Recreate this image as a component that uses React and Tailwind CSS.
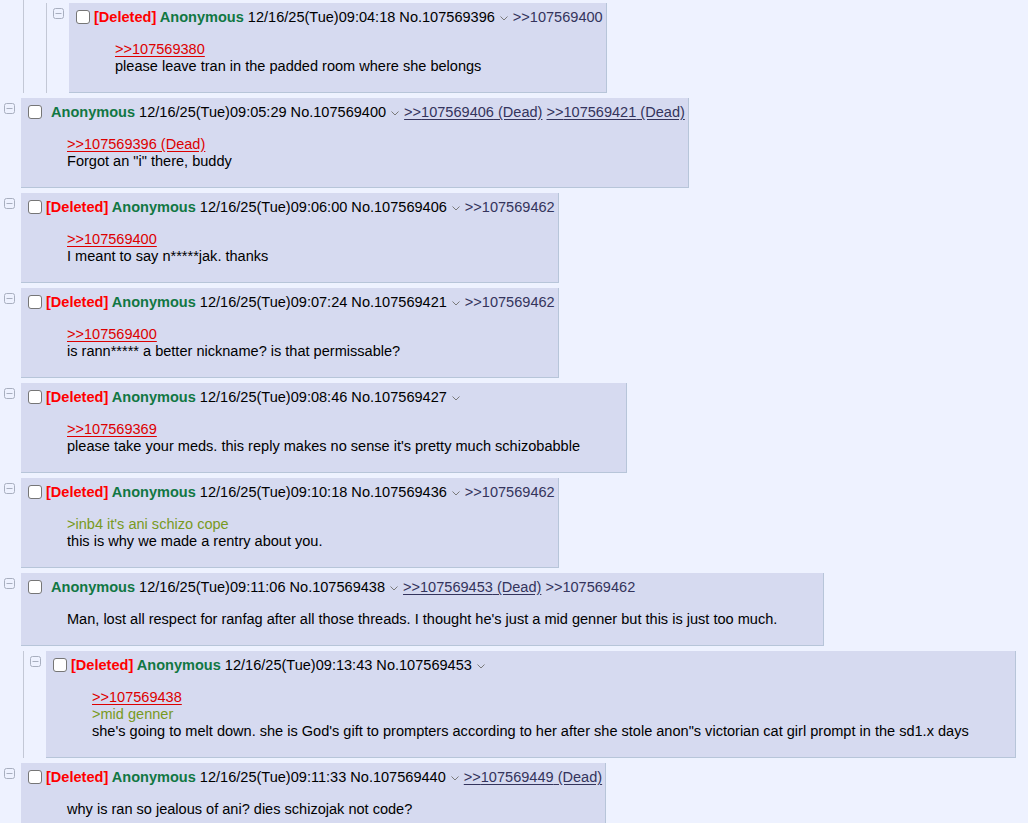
const POSTS = [
  {
    depth: 2,
    deleted: true,
    time: '12/16/25(Tue)09:04:18',
    no: '107569396',
    backlinks: [{ no: '107569400' }],
    body: [
      { kind: 'quote', text: '>>107569380' },
      { kind: 'text', text: 'please leave tran in the padded room where she belongs' },
    ],
  },
  {
    depth: 0,
    deleted: false,
    time: '12/16/25(Tue)09:05:29',
    no: '107569400',
    backlinks: [
      { no: '107569406', dead: true },
      { no: '107569421', dead: true },
    ],
    body: [
      { kind: 'quote', text: '>>107569396 (Dead)' },
      { kind: 'text', text: 'Forgot an "i" there, buddy' },
    ],
  },
  {
    depth: 0,
    deleted: true,
    time: '12/16/25(Tue)09:06:00',
    no: '107569406',
    backlinks: [{ no: '107569462' }],
    body: [
      { kind: 'quote', text: '>>107569400' },
      { kind: 'text', text: 'I meant to say n*****jak. thanks' },
    ],
  },
  {
    depth: 0,
    deleted: true,
    time: '12/16/25(Tue)09:07:24',
    no: '107569421',
    backlinks: [{ no: '107569462' }],
    body: [
      { kind: 'quote', text: '>>107569400' },
      { kind: 'text', text: 'is rann***** a better nickname? is that permissable?' },
    ],
  },
  {
    depth: 0,
    deleted: true,
    time: '12/16/25(Tue)09:08:46',
    no: '107569427',
    backlinks: [],
    body: [
      { kind: 'quote', text: '>>107569369' },
      { kind: 'text', text: "please take your meds. this reply makes no sense it's pretty much schizobabble" },
    ],
  },
  {
    depth: 0,
    deleted: true,
    time: '12/16/25(Tue)09:10:18',
    no: '107569436',
    backlinks: [{ no: '107569462' }],
    body: [
      { kind: 'green', text: ">inb4 it's ani schizo cope" },
      { kind: 'text', text: 'this is why we made a rentry about you.' },
    ],
  },
  {
    depth: 0,
    deleted: false,
    time: '12/16/25(Tue)09:11:06',
    no: '107569438',
    backlinks: [{ no: '107569453', dead: true }, { no: '107569462' }],
    body: [
      {
        kind: 'text',
        text: "Man, lost all respect for ranfag after all those threads. I thought he's just a mid genner but this is just too much.",
      },
    ],
  },
  {
    depth: 1,
    deleted: true,
    time: '12/16/25(Tue)09:13:43',
    no: '107569453',
    backlinks: [],
    body: [
      { kind: 'quote', text: '>>107569438' },
      { kind: 'green', text: '>mid genner' },
      {
        kind: 'text',
        text: 'she\'s going to melt down. she is God\'s gift to prompters according to her after she stole anon"s victorian cat girl prompt in the sd1.x days',
      },
    ],
  },
  {
    depth: 0,
    deleted: true,
    time: '12/16/25(Tue)09:11:33',
    no: '107569440',
    backlinks: [{ no: '107569449', dead: true }],
    body: [{ kind: 'text', text: 'why is ran so jealous of ani? dies schizojak not code?' }],
  },
]

function CollapseIcon() {
  return (
    <svg width="11" height="11" viewBox="0 0 11 11" className="block">
      <rect x="0.5" y="0.5" width="10" height="10" rx="2" fill="none" stroke="#a8afbf" />
      <line x1="2.5" y1="5.5" x2="8.5" y2="5.5" stroke="#a8afbf" />
    </svg>
  )
}

function Chevron() {
  return (
    <svg width="8" height="5" viewBox="0 0 8 5" className="inline-block align-middle mx-[5px]">
      <path d="M0.5 0.5 L4 4 L7.5 0.5" fill="none" stroke="#7a7a7a" strokeWidth="1" />
    </svg>
  )
}

function Post({ post }) {
  return (
    <div className="w-fit bg-[#d6daf0] border-r border-b border-[#b7c5d9] pb-[17px]">
      {/* header */}
      <div className="mt-[4px] h-[20px] leading-[20px] whitespace-nowrap pl-[7px] pr-[3px]">
        <span className="inline-block align-middle w-[14px] h-[14px] rounded-[3px] border border-[#767676] bg-white mr-[4px] -mt-[2px]" />
        {post.deleted ? (
          <span className="font-bold text-[#f00]">[Deleted] </span>
        ) : (
          <span className="inline-block w-[5px]" />
        )}
        <span className="font-bold text-[#117743]">Anonymous</span>
        <span> {post.time} No.{post.no}</span>
        <Chevron />
        {post.backlinks.map((b, i) => (
          <span key={b.no}>
            {i > 0 && ' '}
            <span className={`text-[#34345c] ${b.dead ? 'underline underline-offset-2' : ''}`}>
              &gt;&gt;{b.no}
              {b.dead && ' (Dead)'}
            </span>
          </span>
        ))}
      </div>

      {/* body */}
      <div className="mt-[14px] ml-[46px] mr-[46px] leading-[17px] whitespace-nowrap">
        {post.body.map((line, i) => (
          <div key={i}>
            {line.kind === 'quote' && (
              <span className="text-[#d00] underline underline-offset-2">{line.text}</span>
            )}
            {line.kind === 'green' && <span className="text-[#789922]">{line.text}</span>}
            {line.kind === 'text' && <span>{line.text}</span>}
          </div>
        ))}
      </div>
    </div>
  )
}

function Row({ post }) {
  const nested = post.depth > 0
  return (
    <div className={`flex items-start ${nested ? 'pl-[6px]' : 'pl-[4px]'}`}>
      <div className={`mt-[5px] ${nested ? 'mr-[5px]' : 'mr-[6px]'}`}>
        <CollapseIcon />
      </div>
      <Post post={post} />
    </div>
  )
}

function Thread({ post, first }) {
  if (post.depth === 2) {
    return (
      <div className={`ml-[23px] border-l border-[#c3c8d6] ${first ? 'pt-[3px]' : ''}`}>
        <div className="ml-[22px] border-l border-[#c3c8d6]">
          <Row post={post} />
        </div>
      </div>
    )
  }
  if (post.depth === 1) {
    return (
      <div className="ml-[23px] border-l border-[#c3c8d6]">
        <Row post={post} />
      </div>
    )
  }
  return <Row post={post} />
}

export default function App() {
  return (
    <div
      className="min-h-screen bg-[#eef2ff] text-black text-[14.55px] overflow-hidden"
      style={{ fontFamily: '"Liberation Sans", Arial, sans-serif' }}
    >
      <div className="flex flex-col gap-[5px]">
        {POSTS.map((p, i) => (
          <Thread key={p.no} post={p} first={i === 0} />
        ))}
      </div>
    </div>
  )
}
